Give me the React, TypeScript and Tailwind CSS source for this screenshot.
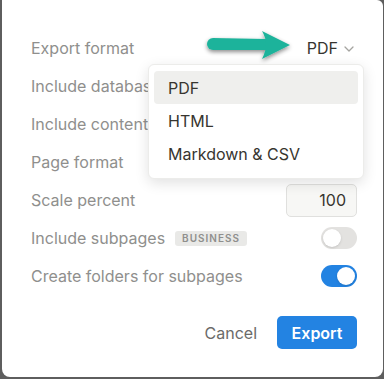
const labelCls = 'text-[16px] text-[#8f8f8d]';

function Toggle({ on }: { on: boolean }) {
  return (
    <div
      className={`w-[36px] h-[22px] rounded-full p-[2px] flex ${
        on ? 'bg-[#2383e2] justify-end' : 'bg-[#e3e2e0] justify-start'
      }`}
    >
      <div className="w-[18px] h-[18px] rounded-full bg-white shadow-sm" />
    </div>
  );
}

function Row({ children }: { children: React.ReactNode }) {
  return <div className="h-[38px] flex items-center justify-between">{children}</div>;
}

export default function App() {
  return (
    <div
      className="relative w-[384px] h-[379px] bg-[#5e5e5e] overflow-hidden"
      style={{ fontFamily: 'Inter, "Noto Sans", sans-serif' }}
    >
      <div className="ml-[2px] w-[381px] h-[377px] bg-white rounded-bl-[8px] rounded-br-[8px] rounded-tr-[6px] pt-[29px] pl-[29px] pr-[26px]">
        <Row>
          <span className={labelCls}>Export format</span>
          <div className="flex items-center gap-[6px] text-[16px] text-[#37352f] mr-[3px]">
            <span>PDF</span>
            <svg width="10" height="6" viewBox="0 0 10 6" className="mt-[1px]">
              <path d="M1 1l4 4 4-4" fill="none" stroke="#a5a4a0" strokeWidth="1.3" strokeLinecap="round" strokeLinejoin="round" />
            </svg>
          </div>
        </Row>
        <Row>
          <span className={labelCls}>Include databases</span>
        </Row>
        <Row>
          <span className={labelCls}>Include content</span>
        </Row>
        <Row>
          <span className={labelCls}>Page format</span>
        </Row>
        <Row>
          <span className={labelCls}>Scale percent</span>
          <div className="w-[71px] h-[33px] rounded-[5px] border border-[#e0e0de] bg-[#f7f7f5] flex items-center justify-end pr-[10px] text-[16px] text-[#37352f]">
            100
          </div>
        </Row>
        <Row>
          <div className="flex items-center gap-[10px]">
            <span className={labelCls}>Include subpages</span>
            <span className="h-[15px] px-[7px] rounded-[3px] bg-[#e9e9e7] text-[10px] font-semibold tracking-[0.1em] text-[#8f8f8d] flex items-center">
              BUSINESS
            </span>
          </div>
          <Toggle on={false} />
        </Row>
        <Row>
          <span className={labelCls}>Create folders for subpages</span>
          <Toggle on />
        </Row>
        <div className="mt-[21px] flex items-center justify-end gap-[20px]">
          <span className="text-[16px] text-[#6b6b69]">Cancel</span>
          <button className="w-[80px] h-[33px] rounded-[5px] bg-[#2383e2] text-white text-[16px] font-semibold">
            Export
          </button>
        </div>
      </div>

      <svg className="absolute left-[200px] top-[26px]" width="100" height="42" viewBox="0 0 100 42">
        <defs>
          <filter id="sh" x="-20%" y="-40%" width="140%" height="180%">
            <feDropShadow dx="0" dy="2" stdDeviation="2" floodColor="#000" floodOpacity="0.45" />
          </filter>
        </defs>
        <g filter="url(#sh)" fill="#1fb39b">
          <path d="M13 12 L66 13 L66 24 L13 24 A6 6 0 0 1 13 12 Z" />
          <path d="M62 5 Q66 12 66 18 Q66 25 62 33 L90 19 Z" />
        </g>
      </svg>

      <div className="absolute left-[148px] top-[64px] w-[216px] rounded-[6px] bg-white border border-[#ececea] shadow-[0_4px_14px_rgba(0,0,0,0.12)] pt-[6px] pb-[8px] px-[5px]">
        <div className="h-[33px] rounded-[4px] bg-[#efefed] flex items-center px-[14px] text-[16px] text-[#37352f]">PDF</div>
        <div className="h-[33px] flex items-center px-[14px] text-[16px] text-[#37352f]">HTML</div>
        <div className="h-[33px] flex items-center px-[14px] text-[16px] text-[#37352f]">Markdown &amp; CSV</div>
      </div>
    </div>
  );
}
